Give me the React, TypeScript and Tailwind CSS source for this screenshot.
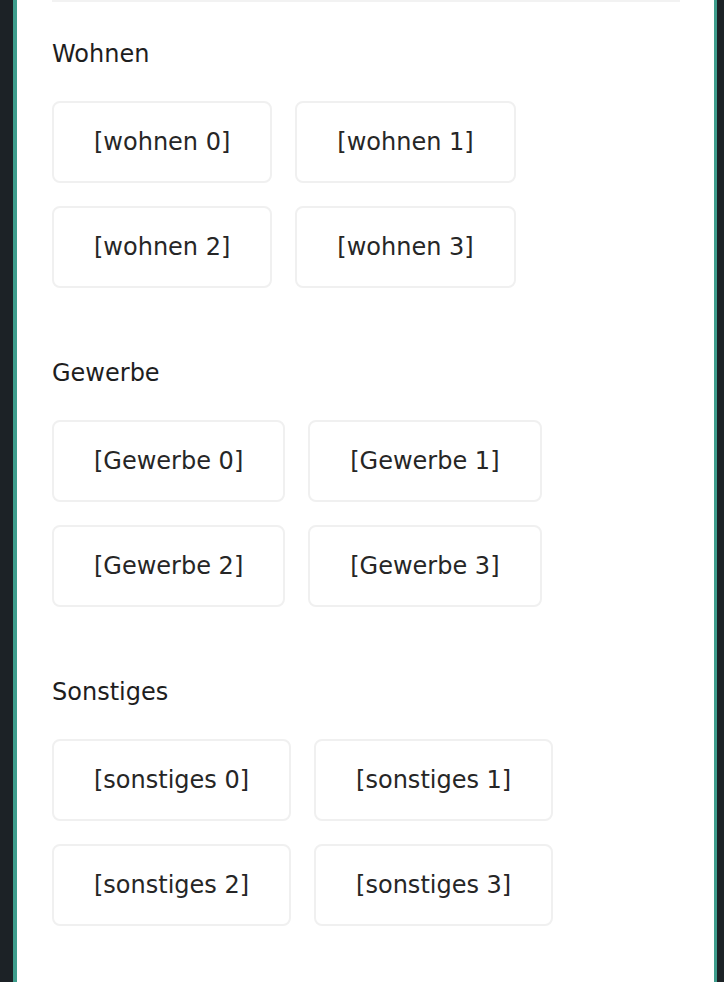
import React from "react";

const sections = [
  { title: "Wohnen", key: "wohnen" },
  { title: "Gewerbe", key: "Gewerbe" },
  { title: "Sonstiges", key: "sonstiges" },
];

function Card({ label }: { label: string }) {
  return (
    <div className="h-[82px] px-[40px] flex items-center justify-center rounded-lg border-2 border-[#f0f0f0] bg-white text-[24px] leading-8 text-[#262626]">
      {label}
    </div>
  );
}

export default function App() {
  return (
    <div
      className="min-h-screen flex bg-[#1c2226]"
      style={{ fontFamily: '"DejaVu Sans", "Liberation Sans", sans-serif' }}
    >
      <div className="w-[13px] bg-[#1c2226]" />
      <div className="w-[4px] bg-[#3e9d8c]" />
      <div className="flex-1 bg-white pl-[35px] pr-[34px]">
        <div className="h-[2px] bg-[#f2f2f2]" />
        <div className="pt-[36px] flex flex-col gap-[69px]">
          {sections.map((s) => (
            <section key={s.key} className="flex flex-col">
              <h2 className="text-[24px] leading-8 text-[#1e1e1e]">{s.title}</h2>
              <div className="mt-[31px] flex flex-col gap-[23px]">
                <div className="flex gap-[23px]">
                  <Card label={`[${s.key} 0]`} />
                  <Card label={`[${s.key} 1]`} />
                </div>
                <div className="flex gap-[23px]">
                  <Card label={`[${s.key} 2]`} />
                  <Card label={`[${s.key} 3]`} />
                </div>
              </div>
            </section>
          ))}
        </div>
      </div>
      <div className="w-[3px] bg-[#3e9d8c]" />
      <div className="w-[7px] bg-[#1c2226]" />
    </div>
  );
}
